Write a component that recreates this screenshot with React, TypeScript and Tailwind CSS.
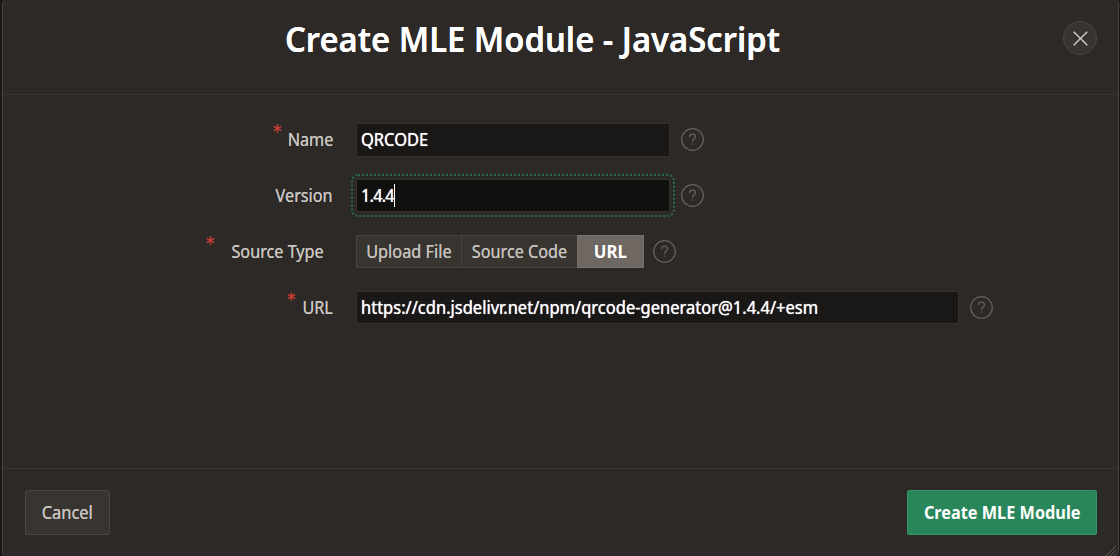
import React from "react";

function HelpIcon() {
  return (
    <svg className="size-[23px] shrink-0" viewBox="0 0 23 23" fill="none" stroke="#65615d" strokeWidth="1.3">
      <circle cx="11.5" cy="11.5" r="10.8" />
      <path d="M8.5 9C8.5 7.1 9.8 6.1 11.5 6.1s3 1.1 3 2.7c0 2.1-3 2.4-3 4.9" />
      <path d="M11.5 15.4v1.5" />
    </svg>
  );
}

function Label({ text, required, wide, box }: { text: string; required?: boolean; wide?: boolean; box: string }) {
  return (
    <div className={"flex w-[333px] shrink-0 justify-end " + (wide ? "pr-[9px]" : "")}>
      <label className={"relative flex h-[33px] items-center justify-end text-[#cac6c2] [text-shadow:0_0_0.6px_#cac6c2] " + box}>
        {required && (
          <svg
            className={"absolute top-px size-[9px] " + (wide ? "-left-[26px]" : "-left-[15px]")}
            viewBox="0 0 9 9"
            stroke="#c93d32"
            strokeWidth="1.4"
          >
            <path d="M4.5 0.3v8.4M0.7 2.4l7.6 4.2M8.3 2.4l-7.6 4.2" />
          </svg>
        )}
        <span className="-mt-[2px] inline-block origin-right scale-x-[0.925]">{text}</span>
      </label>
    </div>
  );
}

const field = "flex items-center rounded-[2px] border border-[#35322f] pl-[4px] text-white [text-shadow:0_0_0.8px_white]";

export default function App() {
  return (
    <div className="h-[556px] w-[1120px] overflow-hidden bg-[#1b1917] pr-[1px] pl-[2px] font-['Noto_Sans','Open_Sans',sans-serif] text-[17.5px] leading-[24px] whitespace-nowrap">
      <div className="flex h-full flex-col rounded-[4px] border-x border-[#45423f] bg-[#2d2926]">
        <header className="relative flex h-[95px] shrink-0 justify-center border-b border-[#383532] pt-[15px] pr-[56px]">
          <h1 className="scale-x-[0.936] text-[35px] leading-[48px] font-semibold text-white [text-shadow:0_0_0.6px_white]">Create MLE Module - JavaScript</h1>
          <button className="absolute top-[21px] right-[21px] flex size-[34px] items-center justify-center rounded-full border border-[#484541] bg-[#383531]">
            <svg className="size-[15px]" viewBox="0 0 15 15" stroke="#cfccc9" strokeWidth="1.4">
              <path d="M0.7 0.7l13.6 13.6M14.3 0.7L0.7 14.3" />
            </svg>
          </button>
        </header>
        <main className="-ml-[3px] flex grow flex-col gap-[23px] pt-[28px]">
          <div className="flex h-[33px] items-center">
            <Label text="Name" required box="w-[45px]" />
            <div className={field + " -mb-px ml-[23px] h-[34px] w-[314px] bg-[#191816]"}>
              <span className="-mt-[2px] origin-left scale-x-[0.94]">QRCODE</span>
            </div>
            <div className="ml-[11px]"><HelpIcon /></div>
          </div>
          <div className="flex h-[33px] items-center">
            <Label text="Version" box="w-[57px]" />
            <div className={field + " ml-[23px] h-[33px] w-[314px] bg-[#10100e] outline-2 outline-offset-[3px] outline-[#276c4e] outline-dotted"}>
              <span className="-mt-px w-[33px] origin-left scale-x-[0.93] tracking-[-0.8px]">1.4.4</span>
              <span className="h-[23px] w-px bg-white" />
            </div>
            <div className="ml-[11px]"><HelpIcon /></div>
          </div>
          <div className="flex h-[33px] items-center">
            <Label text="Source Type" required wide box="w-[92px]" />
            <div className="ml-[23px] flex h-[33px] text-[#c6c2be]">
              <button className="flex w-[106px] items-center justify-center border border-[#484541] bg-[#383531] pb-px [text-shadow:0_0_0.6px_#c6c2be]">
                <span className="scale-x-[0.93]">Upload File</span>
              </button>
              <button className="flex w-[115px] items-center justify-center border-y border-[#484541] bg-[#383531] pb-px [text-shadow:0_0_0.6px_#c6c2be]">
                <span className="scale-x-[0.925]">Source Code</span>
              </button>
              <button className="flex w-[67px] items-center justify-center border border-[#7a726d] bg-[#6f6762] pb-px font-bold text-white">
                <span className="scale-x-[0.96]">URL</span>
              </button>
            </div>
            <div className="ml-[9px]"><HelpIcon /></div>
          </div>
          <div className="flex h-[33px] items-center">
            <Label text="URL" required box="w-[31px]" />
            <div className={field + " ml-[23px] h-[33px] w-[603px] bg-[#191816]"}>
              <span className="-mt-px origin-left scale-x-[0.943]">https://cdn.jsdelivr.net/npm/qrcode-generator@1.4.4/+esm</span>
            </div>
            <div className="ml-[11px]"><HelpIcon /></div>
          </div>
        </main>
        <footer className="relative flex h-[88px] shrink-0 items-center justify-between border-t border-[#383532] pr-[21px] pl-[22px]">
          <button className="flex h-[45px] w-[85px] items-center justify-center rounded-[2px] border border-[#4a4743] bg-[#383531] pb-px text-[#cac6c2] [text-shadow:0_0_0.6px_#cac6c2]">
            <span className="scale-x-[0.94]">Cancel</span>
          </button>
          <button className="flex h-[45px] w-[190px] items-center justify-center rounded-[2px] border border-[#369469] bg-[#29865a] pb-px font-bold text-white">
            <span className="scale-x-[0.93]">Create MLE Module</span>
          </button>
          <svg className="absolute right-[2px] bottom-0 size-[10px]" viewBox="0 0 10 10" stroke="#6f6b67" strokeWidth="0.8">
            <path d="M0 10L10 0M4 10l6-6M8 10l2-2" />
          </svg>
        </footer>
      </div>
    </div>
  );
}
